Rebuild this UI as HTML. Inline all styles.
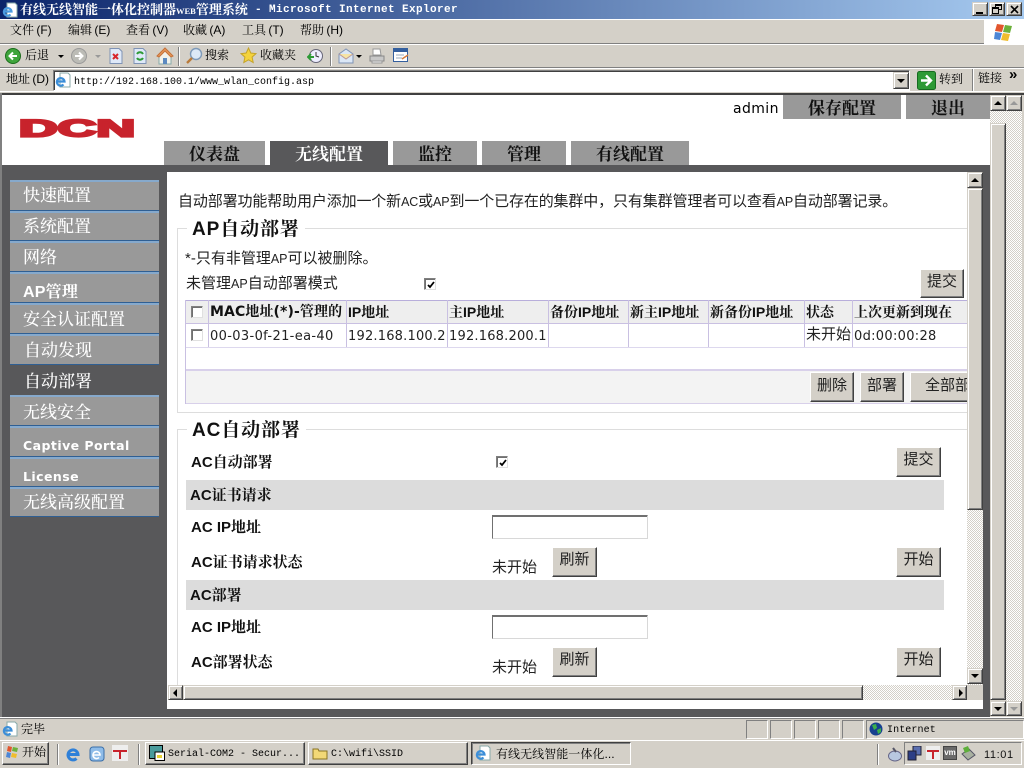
<!DOCTYPE html>
<html lang="zh"><head><meta charset="utf-8"><title>有线无线智能一体化控制器WEB管理系统</title>
<style>
html,body{margin:0;padding:0;width:1024px;height:768px;overflow:hidden;background:#d4d0c8}
body{position:relative;font-family:"Liberation Sans","WenQuanYi Zen Hei","Noto Sans CJK SC",sans-serif;font-size:12px;color:#000}
div,svg,span.a{position:absolute;box-sizing:border-box}
.t{position:absolute;white-space:nowrap;height:20px;line-height:20px}
.s{font-family:"Liberation Mono","Noto Serif CJK SC",monospace}
.ui{font-family:"Liberation Sans","Noto Serif CJK SC",serif;font-size:12px}
.m{word-spacing:-1px}
.tab{background:#999;font-family:"Noto Serif CJK SC",serif;font-weight:700;font-size:17px;text-align:center;line-height:24px;color:#111}
.tab.on{background:#58585a;color:#fff}
.nav{left:10px;width:149px;height:31px;background:#999;border-top:2px solid #86a9cc;border-bottom:1px solid #2f5f93;color:#fff;font-family:"Liberation Sans","Noto Serif CJK SC",serif;font-size:17px;padding-left:13px;line-height:28px;font-weight:500}
.nav.on{background:#58585a;border-color:#58585a}
.nav.d{font-family:'DejaVu Sans',sans-serif;font-size:12.5px;font-weight:700;letter-spacing:.45px;padding-top:4px}
.btn{background:#d4d0c8;border:1px solid;border-color:#fff #404040 #404040 #fff;box-shadow:inset -1px -1px 0 #808080;font-family:"Liberation Sans","Noto Sans CJK SC",sans-serif;font-size:15px;text-align:center;color:#222}
.sb{background:#d4d0c8;border:1px solid;border-color:#d4d0c8 #404040 #404040 #d4d0c8;box-shadow:inset 1px 1px 0 #fff,inset -1px -1px 0 #808080}
.dith{background-color:#eee;background-image:conic-gradient(#d4d0c8 25%,#fff 0 50%,#d4d0c8 0 75%,#fff 0);background-size:2px 2px}
.tri{position:absolute;width:0;height:0;border-style:solid;border-color:transparent}
.c14{font-family:"Liberation Sans","Noto Sans CJK SC",sans-serif;font-size:15px;color:#222}
.c14 span{font-size:12.5px}
.b14{font-family:"Liberation Sans","Noto Serif CJK SC",serif;font-size:15px;font-weight:700;color:#111}
.th{top:301px;height:22px;font-family:"Liberation Sans","Noto Serif CJK SC",serif;font-weight:700;font-size:14px;line-height:22px;white-space:nowrap;overflow:hidden;padding-left:1px;color:#111}
.vl{width:1px;background:#c9c0e2}
.cb{width:12px;height:12px;background:#fff;border:1px solid;border-color:#808080 #e0e0e0 #e0e0e0 #808080;box-shadow:inset 1px 1px 0 #707070}
.task{top:742px;height:23px;background:#d4d0c8;border:1px solid;border-color:#fff #404040 #404040 #fff;box-shadow:inset -1px -1px 0 #808080}
</style></head><body>

<!-- title bar -->
<div style="left:0;top:0;width:1024px;height:19px;background:linear-gradient(90deg,#0a246a,#a6caf0)"></div>
<svg style="left:2px;top:2px" width="16" height="16" viewBox="0 0 16 16"><path d="M5 1h8l2 2v12H5z" fill="#fff" stroke="#8aa"/><path d="M2 9.500h7.500a3.800 3.800 0 1 0-1 3" stroke="#4a9be0" stroke-width="2.200" fill="none"/></svg>
<div class="t" style="left:20px;top:0;color:#fff;font-family:'Liberation Serif','Noto Serif CJK SC',serif;font-size:13px;font-weight:700">有线无线智能一体化控制器<span style="font-size:8.500px">WEB</span>管理系统</div>
<div class="t s" style="left:255px;top:0;color:#fff;font-size:11px;font-weight:700;letter-spacing:.4px">- Microsoft Internet Explorer</div>
<div class="sb" style="left:972px;top:2px;width:16px;height:14px"><div style="left:3px;top:9px;width:7px;height:2px;background:#000"></div></div>
<div class="sb" style="left:989px;top:2px;width:16px;height:14px"><div style="left:5px;top:1px;width:7px;height:6px;border:1px solid #000;border-top-width:2px"></div><div style="left:2px;top:4px;width:7px;height:7px;border:1px solid #000;border-top-width:2px;background:#d4d0c8"></div></div>
<div class="sb" style="left:1006px;top:2px;width:16px;height:14px"><svg style="left:3px;top:2px" width="9" height="9"><path d="M1 1l7 7M8 1L1 8" stroke="#000" stroke-width="1.600"/></svg></div>

<!-- menu -->
<div style="left:0;top:19px;width:1024px;height:1px;background:#fff"></div>
<div style="left:0;top:43px;width:1024px;height:1px;background:#808080"></div>
<div style="left:0;top:44px;width:1024px;height:1px;background:#fff"></div>
<div style="left:0;top:67px;width:1024px;height:1px;background:#808080"></div>
<div style="left:0;top:68px;width:1024px;height:1px;background:#fff"></div>
<div class="t ui m" style="left:10px;top:20px">文件 (F)</div>
<div class="t ui m" style="left:68px;top:20px">编辑 (E)</div>
<div class="t ui m" style="left:126px;top:20px">查看 (V)</div>
<div class="t ui m" style="left:183px;top:20px">收藏 (A)</div>
<div class="t ui m" style="left:242px;top:20px">工具 (T)</div>
<div class="t ui m" style="left:300px;top:20px">帮助 (H)</div>
<div style="left:984px;top:20px;width:40px;height:24px;background:#fff"></div>
<svg style="left:992px;top:22px" width="24" height="20" viewBox="0 0 24 20"><path d="M5 2l7 1-2 7-7-1z" fill="#e2562e"/><path d="M13 3l7 1-2 7-7-1z" fill="#6cb13a"/><path d="M3 10l7 1-2 7-6-1z" fill="#4c86d6"/><path d="M11 11l7 1-2 7-7-1z" fill="#f0bd2c"/></svg>

<!-- toolbar -->
<svg style="left:5px;top:48px" width="16" height="16" viewBox="0 0 16 16"><circle cx="8" cy="8" r="7.500" fill="#3fa43c" stroke="#1c6e1c"/><path d="M12 8H5M8 4.500L4.500 8 8 11.500" stroke="#fff" stroke-width="2" fill="none"/></svg>
<div class="t ui" style="left:25px;top:45px">后退</div>
<div class="tri" style="left:58px;top:55px;border-width:3px 3px 0;border-top-color:#000"></div>
<svg style="left:71px;top:48px" width="16" height="16" viewBox="0 0 16 16"><circle cx="8" cy="8" r="7.500" fill="#bcbcb6" stroke="#999"/><path d="M4 8h7M8 4.500L11.500 8 8 11.500" stroke="#fff" stroke-width="2" fill="none"/></svg>
<div class="tri" style="left:95px;top:55px;border-width:3px 3px 0;border-top-color:#999"></div>
<svg style="left:109px;top:48px" width="14" height="16" viewBox="0 0 14 16"><path d="M1 .5h9l3 3v12H1z" fill="#dfe9f8" stroke="#7f93b5"/><path d="M4 6l5 5M9 6l-5 5" stroke="#d8262c" stroke-width="2"/></svg>
<svg style="left:133px;top:48px" width="14" height="16" viewBox="0 0 14 16"><path d="M1 .5h9l3 3v12H1z" fill="#dfe9f8" stroke="#7f93b5"/><path d="M4 6a3.500 3.500 0 0 1 6 0M10 10a3.500 3.500 0 0 1-6 0" stroke="#2d9a35" stroke-width="2" fill="none"/></svg>
<svg style="left:156px;top:47px" width="18" height="18" viewBox="0 0 18 18"><path d="M3 9v8h12V9L9 3z" fill="#f2f2ea" stroke="#8aa"/><path d="M1 9l8-8 8 8-2 1-6-6-6 6z" fill="#e89a5a" stroke="#c5713a"/><path d="M7 11h4v6H7z" fill="#5d8ac0"/></svg>
<div style="left:178px;top:47px;width:2px;height:19px;background:#808080;border-right:1px solid #fff"></div>
<svg style="left:185px;top:47px" width="18" height="18" viewBox="0 0 18 18"><circle cx="11" cy="7" r="5.500" fill="#dce9f7" stroke="#7e9ab9" stroke-width="1.400"/><path d="M7 11l-5 5" stroke="#b97b3a" stroke-width="2.400"/></svg>
<div class="t ui" style="left:205px;top:45px">搜索</div>
<svg style="left:240px;top:47px" width="17" height="17" viewBox="0 0 17 17"><path d="M8.500 1l2.300 5 5.200.6-3.900 3.500 1.100 5.400-4.700-2.700-4.700 2.700 1.100-5.400L1 6.600 6.200 6z" fill="#f4d33d" stroke="#c4a32a"/></svg>
<div class="t ui" style="left:260px;top:45px">收藏夹</div>
<svg style="left:307px;top:48px" width="17" height="16" viewBox="0 0 17 16"><circle cx="9" cy="8" r="6.500" fill="#eef" stroke="#667"/><path d="M1 9h6M4 6l-3 3 3 3" stroke="#2d9a35" stroke-width="2" fill="none"/><path d="M9 4v4l3 1" stroke="#333" fill="none"/></svg>
<div style="left:330px;top:47px;width:2px;height:19px;background:#808080;border-right:1px solid #fff"></div>
<svg style="left:338px;top:48px" width="16" height="16" viewBox="0 0 16 16"><path d="M1 6l7-5 7 5v9H1z" fill="#dbe7f6" stroke="#7f93b5"/><path d="M1 6l7 5 7-5" fill="#f6e4a5" stroke="#b99"/></svg>
<div class="tri" style="left:356px;top:55px;border-width:3px 3px 0;border-top-color:#000"></div>
<svg style="left:369px;top:48px" width="16" height="16" viewBox="0 0 16 16"><path d="M4 1h7l1 6H4z" fill="#fff" stroke="#999"/><path d="M1 8h14v5H1z" fill="#c8c8c8" stroke="#888"/><path d="M3 13h10v2H3z" fill="#eee" stroke="#999"/></svg>
<svg style="left:393px;top:47px" width="17" height="16" viewBox="0 0 17 16"><path d="M.5 1.500h14v13H.500z" fill="#fff" stroke="#345f9e"/><path d="M1 2h13v3H1z" fill="#345f9e"/><path d="M3 8h8M3 11h6" stroke="#9ab"/><path d="M9 12l6-4" stroke="#d77b38" stroke-width="1.500"/></svg>

<!-- address bar -->
<div class="t ui m" style="left:6px;top:69px">地址 (D)</div>
<div style="left:53px;top:70px;width:857px;height:21px;background:#fff;border:1px solid;border-color:#808080 #fff #fff #808080;box-shadow:inset 1px 1px 0 #404040"></div>
<svg style="left:55px;top:72px" width="16" height="16" viewBox="0 0 16 16"><path d="M5 1h8l2 2v12H5z" fill="#fff" stroke="#8aa"/><path d="M2 9.500h7.500a3.800 3.800 0 1 0-1 3" stroke="#3c8ed8" stroke-width="2.200" fill="none"/></svg>
<div class="t s" style="left:74px;top:73px;font-size:10px">http://192.168.100.1/www_wlan_config.asp</div>
<div class="sb" style="left:893px;top:72px;width:16px;height:17px"><div class="tri" style="left:3px;top:6px;border-width:4px 4px 0;border-top-color:#000"></div></div>
<svg style="left:917px;top:71px" width="19" height="19" viewBox="0 0 19 19"><rect x=".5" y=".5" width="18" height="18" rx="2" fill="#2d9a35" stroke="#176b20"/><path d="M4 9.500h9M9 4.500l5 5-5 5" stroke="#fff" stroke-width="2.400" fill="none"/></svg>
<div class="t ui" style="left:939px;top:69px">转到</div>
<div style="left:972px;top:69px;width:2px;height:22px;background:#808080;border-right:1px solid #fff"></div>
<div class="t ui" style="left:978px;top:68px">链接</div>
<div class="t" style="left:1009px;top:65px;font-size:15px;font-weight:700">»</div>
<div style="left:0;top:91px;width:1024px;height:1px;background:#fff"></div>

<!-- page -->
<div style="left:0;top:93px;width:1024px;height:2px;background:#404040"></div>
<div style="left:0;top:93px;width:2px;height:624px;background:#808080"></div>
<div style="left:2px;top:95px;width:988px;height:70px;background:#fff"></div>
<svg style="left:18px;top:117px" width="118" height="21"><text x="1" y="19.500" textLength="116" lengthAdjust="spacingAndGlyphs" font-family="Liberation Sans" font-weight="700" font-size="24" fill="#c8232c" stroke="#c8232c" stroke-width="2.200">DCN</text></svg>
<div class="t" style="left:733px;top:99px;font-family:'DejaVu Sans',sans-serif;font-size:14px;letter-spacing:.4px;color:#000">admin</div>
<div class="tab" style="left:783px;top:95px;width:118px;height:24px">保存配置</div>
<div class="tab" style="left:906px;top:95px;width:84px;height:24px">退出</div>
<div class="tab" style="left:164px;top:141px;width:101px;height:24px">仪表盘</div>
<div class="tab on" style="left:270px;top:141px;width:118px;height:24px">无线配置</div>
<div class="tab" style="left:393px;top:141px;width:84px;height:24px">监控</div>
<div class="tab" style="left:482px;top:141px;width:84px;height:24px">管理</div>
<div class="tab" style="left:571px;top:141px;width:118px;height:24px">有线配置</div>

<!-- dark body -->
<div style="left:2px;top:165px;width:988px;height:552px;background:#58585a"></div>

<!-- nav -->
<div class="nav" style="top:180px">快速配置</div>
<div class="nav" style="top:211px;height:30px">系统配置</div>
<div class="nav" style="top:241px;padding-top:1px">网络</div>
<div class="nav" style="top:272px;padding-top:5px;font-size:16px;font-weight:700;letter-spacing:.2px">AP管理</div>
<div class="nav" style="top:303px;padding-top:1px">安全认证配置</div>
<div class="nav" style="top:334px;padding-left:14px;padding-top:1px">自动发现</div>
<div class="nav on" style="top:365px;height:30px;padding-left:14px;padding-top:1px">自动部署</div>
<div class="nav" style="top:395px;padding-top:2px">无线安全</div>
<div class="nav d" style="top:426px">Captive Portal</div>
<div class="nav d" style="top:457px;height:30px">License</div>
<div class="nav" style="top:487px;height:30px">无线高级配置</div>

<!-- content -->
<div style="left:167px;top:172px;width:816px;height:537px;background:#fff;overflow:hidden">
  <div class="t c14" style="left:11px;top:20px;letter-spacing:-.13px">自动部署功能帮助用户添加一个新<span>AC</span>或<span>AP</span>到一个已存在的集群中，只有集群管理者可以查看<span>AP</span>自动部署记录。</div>
</div>
<div style="left:177px;top:228px;width:790px;height:185px;border:1px solid #ddd;border-right:0"></div>
<div class="t" style="left:187px;top:219px;background:#fff;padding:0 5px;font-family:'Liberation Sans','Noto Serif CJK SC',serif;font-size:19px;font-weight:700;letter-spacing:.9px;color:#111;line-height:22px">AP自动部署</div>
<div class="t c14" style="left:185px;top:249px">*-只有非管理<span>AP</span>可以被删除。</div>
<div class="t c14" style="left:186px;top:274px">未管理<span>AP</span>自动部署模式</div>
<div class="cb" style="left:424px;top:278px"><svg style="left:1px;top:1px" width="10" height="10"><path d="M2 5l2 2 4-5" stroke="#000" stroke-width="1.800" fill="none"/></svg></div>
<div class="btn" style="left:920px;top:269px;width:44px;height:29px;line-height:24px">提交</div>

<!-- table -->
<div style="left:185px;top:300px;width:782px;height:104px;overflow:hidden;background:#fff">
  <div style="left:0;top:0;width:782px;height:1px;background:#b8aedb"></div>
  <div style="left:0;top:1px;width:782px;height:22px;background:#eee"></div>
  <div style="left:0;top:23px;width:782px;height:1px;background:#c9c0e2"></div>
  <div style="left:0;top:47px;width:782px;height:1px;background:#ddd8ee"></div>
  <div style="left:0;top:69px;width:782px;height:2px;background:#d8d0ea"></div>
  <div style="left:0;top:71px;width:782px;height:32px;background:#f3f3f3"></div>
  <div style="left:0;top:103px;width:782px;height:1px;background:#d8d0ea"></div>
  <div style="left:0;top:0;width:1px;height:104px;background:#c9c0e2"></div>
  <div class="vl" style="left:23px;top:0;height:47px"></div>
  <div class="vl" style="left:161px;top:0;height:47px"></div>
  <div class="vl" style="left:262px;top:0;height:47px"></div>
  <div class="vl" style="left:363px;top:0;height:47px"></div>
  <div class="vl" style="left:443px;top:0;height:47px"></div>
  <div class="vl" style="left:523px;top:0;height:47px"></div>
  <div class="vl" style="left:619px;top:0;height:47px"></div>
  <div class="vl" style="left:667px;top:0;height:47px"></div>
</div>
<div class="cb" style="left:191px;top:306px"></div>
<div class="cb" style="left:191px;top:329px"></div>
<div class="th" style="left:208px;width:138px;font-family:'DejaVu Sans','Noto Serif CJK SC',serif;font-size:14px;letter-spacing:.1px;padding-left:2px">MAC地址(*)-管理的</div>
<div class="th" style="left:347px;width:100px">IP地址</div>
<div class="th" style="left:448px;width:100px">主IP地址</div>
<div class="th" style="left:549px;width:79px">备份IP地址</div>
<div class="th" style="left:629px;width:79px">新主IP地址</div>
<div class="th" style="left:709px;width:95px">新备份IP地址</div>
<div class="th" style="left:805px;width:47px">状态</div>
<div class="th" style="left:853px;width:114px">上次更新到现在</div>
<div class="t" style="left:210px;top:327px;font-family:'DejaVu Sans',sans-serif;font-size:13px;letter-spacing:.35px;color:#222">00-03-0f-21-ea-40</div>
<div class="t" style="left:348px;top:327px;font-family:'DejaVu Sans',sans-serif;font-size:13px;letter-spacing:.2px;color:#222">192.168.100.2</div>
<div class="t" style="left:449px;top:327px;font-family:'DejaVu Sans',sans-serif;font-size:13px;letter-spacing:.2px;color:#222">192.168.200.1</div>
<div class="t c14" style="left:806px;top:325px">未开始</div>
<div class="t" style="left:854px;top:327px;font-family:'DejaVu Sans',sans-serif;font-size:13px;letter-spacing:.3px;color:#222">0d:00:00:28</div>
<div class="btn" style="left:810px;top:372px;width:44px;height:30px;line-height:26px">删除</div>
<div class="btn" style="left:860px;top:372px;width:44px;height:30px;line-height:26px">部署</div>
<div style="left:910px;top:372px;width:57px;height:30px;overflow:hidden"><div class="btn" style="left:0;top:0;width:90px;height:30px;line-height:26px">全部部署</div></div>

<!-- AC fieldset -->
<div style="left:177px;top:429px;width:790px;height:256px;border-top:1px solid #ddd;border-left:1px solid #ddd"></div>
<div class="t" style="left:187px;top:420px;background:#fff;padding:0 5px;font-family:'Liberation Sans','Noto Serif CJK SC',serif;font-size:19px;font-weight:700;letter-spacing:.9px;color:#111;line-height:22px">AC自动部署</div>
<div class="t b14" style="left:191px;top:453px">AC自动部署</div>
<div class="cb" style="left:496px;top:456px"><svg style="left:1px;top:1px" width="10" height="10"><path d="M2 5l2 2 4-5" stroke="#000" stroke-width="1.800" fill="none"/></svg></div>
<div class="btn" style="left:896px;top:447px;width:45px;height:30px;line-height:24px">提交</div>
<div style="left:186px;top:480px;width:758px;height:30px;background:#dcdcdc"></div>
<div class="t b14" style="left:190px;top:486px">AC证书请求</div>
<div class="t b14" style="left:191px;top:518px">AC IP地址</div>
<div style="left:492px;top:515px;width:156px;height:24px;background:#fff;border:1px solid;border-color:#707070 #d8d8d8 #d8d8d8 #707070;box-shadow:inset 0 1px 0 #707070"></div>
<div class="t b14" style="left:191px;top:553px">AC证书请求状态</div>
<div class="t c14" style="left:492px;top:558px">未开始</div>
<div class="btn" style="left:552px;top:547px;width:45px;height:30px;line-height:24px">刷新</div>
<div class="btn" style="left:896px;top:547px;width:45px;height:30px;line-height:24px">开始</div>
<div style="left:186px;top:580px;width:758px;height:30px;background:#dcdcdc"></div>
<div class="t b14" style="left:190px;top:586px">AC部署</div>
<div class="t b14" style="left:191px;top:618px">AC IP地址</div>
<div style="left:492px;top:615px;width:156px;height:24px;background:#fff;border:1px solid;border-color:#707070 #d8d8d8 #d8d8d8 #707070;box-shadow:inset 0 1px 0 #707070"></div>
<div class="t b14" style="left:191px;top:653px">AC部署状态</div>
<div class="t c14" style="left:492px;top:658px">未开始</div>
<div class="btn" style="left:552px;top:647px;width:45px;height:30px;line-height:24px">刷新</div>
<div class="btn" style="left:896px;top:647px;width:45px;height:30px;line-height:24px">开始</div>

<!-- inner v scrollbar -->
<div class="dith" style="left:967px;top:172px;width:16px;height:513px"></div>
<div class="sb" style="left:967px;top:172px;width:16px;height:16px"><div class="tri" style="left:3px;top:5px;border-width:0 4px 4px;border-bottom-color:#000"></div></div>
<div class="sb" style="left:967px;top:188px;width:16px;height:322px"></div>
<div class="sb" style="left:967px;top:668px;width:16px;height:16px"><div class="tri" style="left:3px;top:5px;border-width:4px 4px 0;border-top-color:#000"></div></div>
<!-- inner h scrollbar -->
<div class="dith" style="left:168px;top:685px;width:799px;height:15px"></div>
<div class="sb" style="left:168px;top:685px;width:15px;height:15px"><div class="tri" style="left:4px;top:3px;border-width:4px 4px 4px 0;border-right-color:#000"></div></div>
<div class="sb" style="left:183px;top:685px;width:680px;height:15px"></div>
<div class="sb" style="left:952px;top:685px;width:15px;height:15px"><div class="tri" style="left:6px;top:3px;border-width:4px 0 4px 4px;border-left-color:#000"></div></div>
<div style="left:967px;top:685px;width:16px;height:15px;background:#d4d0c8"></div>

<!-- outer v scrollbars -->
<div class="sb" style="left:990px;top:95px;width:16px;height:16px"><div class="tri" style="left:3px;top:5px;border-width:0 4px 4px;border-bottom-color:#000"></div></div>
<div class="dith" style="left:990px;top:111px;width:16px;height:12px"></div>
<div class="sb" style="left:990px;top:123px;width:16px;height:577px"></div>
<div class="sb" style="left:990px;top:701px;width:16px;height:15px"><div class="tri" style="left:3px;top:5px;border-width:4px 4px 0;border-top-color:#000"></div></div>
<div class="dith" style="left:1006px;top:111px;width:16px;height:590px"></div>
<div class="sb" style="left:1006px;top:95px;width:16px;height:16px"><div class="tri" style="left:3px;top:5px;border-width:0 4px 4px;border-bottom-color:#999"></div></div>
<div class="sb" style="left:1006px;top:701px;width:16px;height:15px"><div class="tri" style="left:3px;top:5px;border-width:4px 4px 0;border-top-color:#999"></div></div>

<!-- status bar -->
<div style="left:0;top:717px;width:1024px;height:1px;background:#fff"></div>
<div style="left:0;top:718px;width:1024px;height:1px;background:#808080"></div>
<svg style="left:2px;top:721px" width="16" height="16" viewBox="0 0 16 16"><path d="M5 1h8l2 2v12H5z" fill="#fff" stroke="#8aa"/><path d="M2 9.500h7.500a3.800 3.800 0 1 0-1 3" stroke="#3c8ed8" stroke-width="2.200" fill="none"/></svg>
<div class="t ui" style="left:21px;top:719px">完毕</div>
<div style="left:746px;top:720px;width:22px;height:19px;border:1px solid;border-color:#808080 #fff #fff #808080"></div>
<div style="left:770px;top:720px;width:22px;height:19px;border:1px solid;border-color:#808080 #fff #fff #808080"></div>
<div style="left:794px;top:720px;width:22px;height:19px;border:1px solid;border-color:#808080 #fff #fff #808080"></div>
<div style="left:818px;top:720px;width:22px;height:19px;border:1px solid;border-color:#808080 #fff #fff #808080"></div>
<div style="left:842px;top:720px;width:22px;height:19px;border:1px solid;border-color:#808080 #fff #fff #808080"></div>
<div style="left:866px;top:720px;width:158px;height:19px;border:1px solid;border-color:#808080 #fff #fff #808080"></div>
<svg style="left:869px;top:722px" width="14" height="14" viewBox="0 0 14 14"><circle cx="7" cy="7" r="6.500" fill="#17408f"/><path d="M3 3l4-1 1 4-3 2zM8 8l4-2 0 4-3 2z" fill="#3bb04a"/></svg>
<div class="t s" style="left:887px;top:721px;font-size:10px;letter-spacing:.1px">Internet</div>

<!-- taskbar -->
<div style="left:0;top:740px;width:1024px;height:1px;background:#fff"></div>
<div class="task" style="left:2px;width:47px"></div>
<svg style="left:5px;top:745px" width="15" height="15" viewBox="0 0 15 15"><path d="M3 1l4 1-1 5-4-1z" fill="#e2562e"/><path d="M8 2l5 1-1 4-5-1z" fill="#6cb13a"/><path d="M2 7l4 1-1 5-4-1z" fill="#4c86d6"/><path d="M7 8l5 1-1 4-5-1z" fill="#f0bd2c"/></svg>
<div class="t ui" style="left:22px;top:742px">开始</div>
<div style="left:57px;top:744px;width:2px;height:21px;background:#808080;border-right:1px solid #fff"></div>
<svg style="left:65px;top:745px" width="17" height="17" viewBox="0 0 17 17"><path d="M3 9.500h10a5 5 0 1 0-1.500 4" stroke="#2f80d8" stroke-width="3" fill="none"/></svg>
<svg style="left:89px;top:745px" width="16" height="17" viewBox="0 0 16 17"><rect x="1" y="2" width="14" height="14" rx="3" fill="#8fbce8" stroke="#3a6ea8"/><path d="M4 10h7a3.500 3.500 0 1 0-1 2.500" stroke="#fff" stroke-width="1.600" fill="none"/></svg>
<svg style="left:112px;top:745px" width="16" height="16" viewBox="0 0 16 16"><rect width="16" height="16" fill="#eee"/><path d="M1 5h14v2H9v7H7V7H1z" fill="#c8232c"/></svg>
<div style="left:138px;top:744px;width:2px;height:21px;background:#808080;border-right:1px solid #fff"></div>
<div class="task" style="left:145px;width:160px"></div>
<svg style="left:149px;top:745px" width="16" height="16" viewBox="0 0 16 16"><rect x=".5" y=".5" width="13" height="13" fill="#4a9b9b" stroke="#000"/><rect x="6" y="7" width="9.500" height="8.500" fill="#fff" stroke="#000"/><rect x="8" y="10" width="5" height="3" fill="#e8d232"/></svg>
<div class="t s" style="left:168px;top:745px;font-size:10px">Serial-COM2 - Secur...</div>
<div class="task" style="left:308px;width:160px"></div>
<svg style="left:312px;top:746px" width="16" height="14" viewBox="0 0 16 14"><path d="M1 3h5l1 2h8v8H1z" fill="#f2d877" stroke="#8a7422"/></svg>
<div class="t s" style="left:331px;top:745px;font-size:10px">C:\wifi\SSID</div>
<div class="task dith" style="left:471px;width:160px;border-color:#404040 #fff #fff #404040;box-shadow:inset 1px 1px 0 #808080"></div>
<svg style="left:475px;top:745px" width="16" height="16" viewBox="0 0 16 16"><path d="M5 1h8l2 2v12H5z" fill="#fff" stroke="#8aa"/><path d="M2 9.500h7.500a3.800 3.800 0 1 0-1 3" stroke="#3c8ed8" stroke-width="2.200" fill="none"/></svg>
<div class="t ui" style="left:496px;top:744px;letter-spacing:.05px">有线无线智能一体化...</div>
<div style="left:877px;top:744px;width:2px;height:21px;background:#808080;border-right:1px solid #fff"></div>
<svg style="left:888px;top:746px" width="14" height="16" viewBox="0 0 14 16"><ellipse cx="7" cy="10" rx="6.500" ry="5" fill="#b8c8e0" stroke="#668"/><path d="M5 2l3 4" stroke="#556" stroke-width="2"/></svg>
<div style="left:904px;top:742px;width:118px;height:23px;border:1px solid;border-color:#808080 #fff #fff #808080"></div>
<svg style="left:907px;top:746px" width="15" height="15" viewBox="0 0 15 15"><rect x="6" y="0" width="8" height="9" fill="#5a6fb0" stroke="#223"/><rect x="1" y="5" width="8" height="9" fill="#2d3f86" stroke="#223"/></svg>
<svg style="left:926px;top:746px" width="14" height="14" viewBox="0 0 14 14"><rect width="14" height="14" fill="#eee"/><path d="M1 4h12v2H8v7H6V6H1z" fill="#c8232c"/></svg>
<div style="left:943px;top:746px;width:14px;height:14px;background:#6a6a6a;border:1px solid #444;color:#fff;font:700 8px/11px 'Liberation Sans',sans-serif;text-align:center">vm</div>
<svg style="left:961px;top:745px" width="15" height="16" viewBox="0 0 15 16"><path d="M1 9l7-5 6 6-7 5z" fill="#a8b0a0" stroke="#556"/><path d="M2 3l5-2 2 5-5 2z" fill="#5cae3a"/></svg>
<div class="t" style="left:984px;top:745px;font-family:'Liberation Sans',sans-serif;font-size:11px;letter-spacing:.6px;color:#111">11:01</div>
</body></html>
